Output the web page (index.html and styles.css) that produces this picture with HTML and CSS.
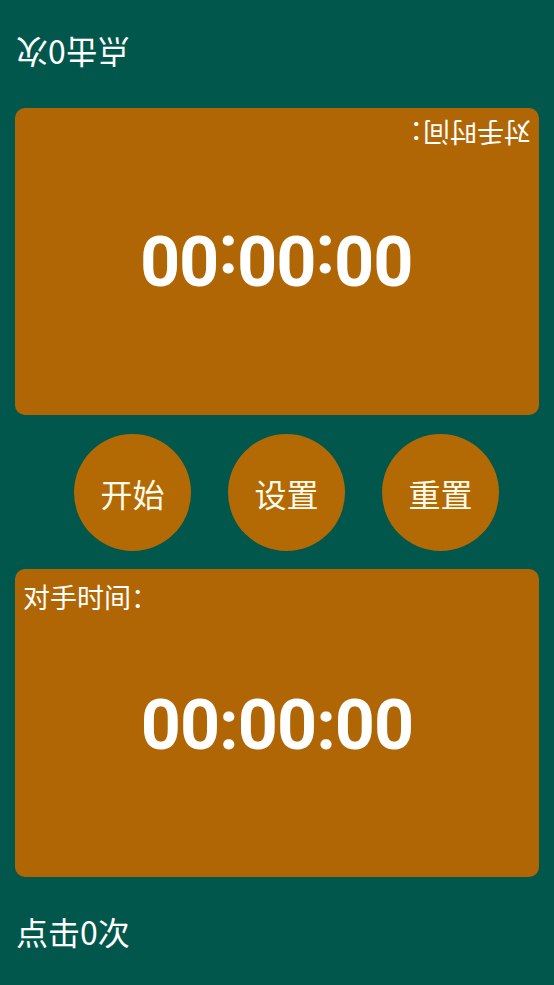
FILE: index.html
```html
<!DOCTYPE html>
<html lang="zh">
<head>
<meta charset="utf-8">
<title>计时器</title>
<link rel="stylesheet" href="styles.css">
</head>
<body>
<div class="screen">
  <div class="count-zone">
    <span class="count flipped">点击0次</span>
  </div>
  <div class="card card-top">
    <span class="label label-top flipped">对手时间：</span>
    <span class="timer flipped">00:00:00</span>
  </div>
  <div class="controls">
    <button class="round-btn">开始</button>
    <button class="round-btn">设置</button>
    <button class="round-btn">重置</button>
  </div>
  <div class="card card-bottom">
    <span class="label">对手时间：</span>
    <span class="timer">00:00:00</span>
  </div>
  <div class="count-zone">
    <span class="count">点击0次</span>
  </div>
</div>
</body>
</html>
```

FILE: styles.css
```css
html, body {
  margin: 0;
  padding: 0;
  background: #01574b;
}

.screen {
  width: 554px;
  height: 985px;
  display: flex;
  flex-direction: column;
  background: #01574b;
  font-family: "Noto Sans CJK SC", "Roboto", sans-serif;
  color: #ffffff;
  overflow: hidden;
}

.count-zone {
  height: 108px;
  display: flex;
  align-items: center;
  padding-left: 16px;
  flex: none;
}

.count {
  display: inline-block;
  font-size: 32px;
  line-height: 1;
}

.flipped {
  transform: rotate(180deg);
}

.card {
  margin: 0 15px;
  background: #b06604;
  border-radius: 10px;
  display: grid;
  grid-template: 1fr / 1fr;
  flex: none;
}

.card-top {
  height: 307px;
}

.card-bottom {
  height: 308px;
}

.card > * {
  grid-area: 1 / 1;
}

.label {
  align-self: start;
  justify-self: start;
  margin: 12px 8px 0;
  font-size: 27px;
  line-height: 31px;
}

.label-top {
  justify-self: end;
  margin-top: 10px;
}

.timer {
  align-self: center;
  justify-self: center;
  font-family: "Roboto", "Liberation Sans", sans-serif;
  font-weight: 700;
  font-size: 70px;
  letter-spacing: -1px;
  line-height: 1;
  padding-top: 4px;
}

.controls {
  flex: none;
  height: 117px;
  margin: 19px 0 18px;
  padding-left: 19px;
  display: flex;
  justify-content: center;
  gap: 37px;
}

.round-btn {
  width: 117px;
  height: 117px;
  border: none;
  border-radius: 50%;
  background: #b36a05;
  color: #fffbea;
  font-family: "Noto Sans CJK SC", sans-serif;
  font-size: 32px;
  padding: 0;
  display: flex;
  align-items: center;
  justify-content: center;
}
```
